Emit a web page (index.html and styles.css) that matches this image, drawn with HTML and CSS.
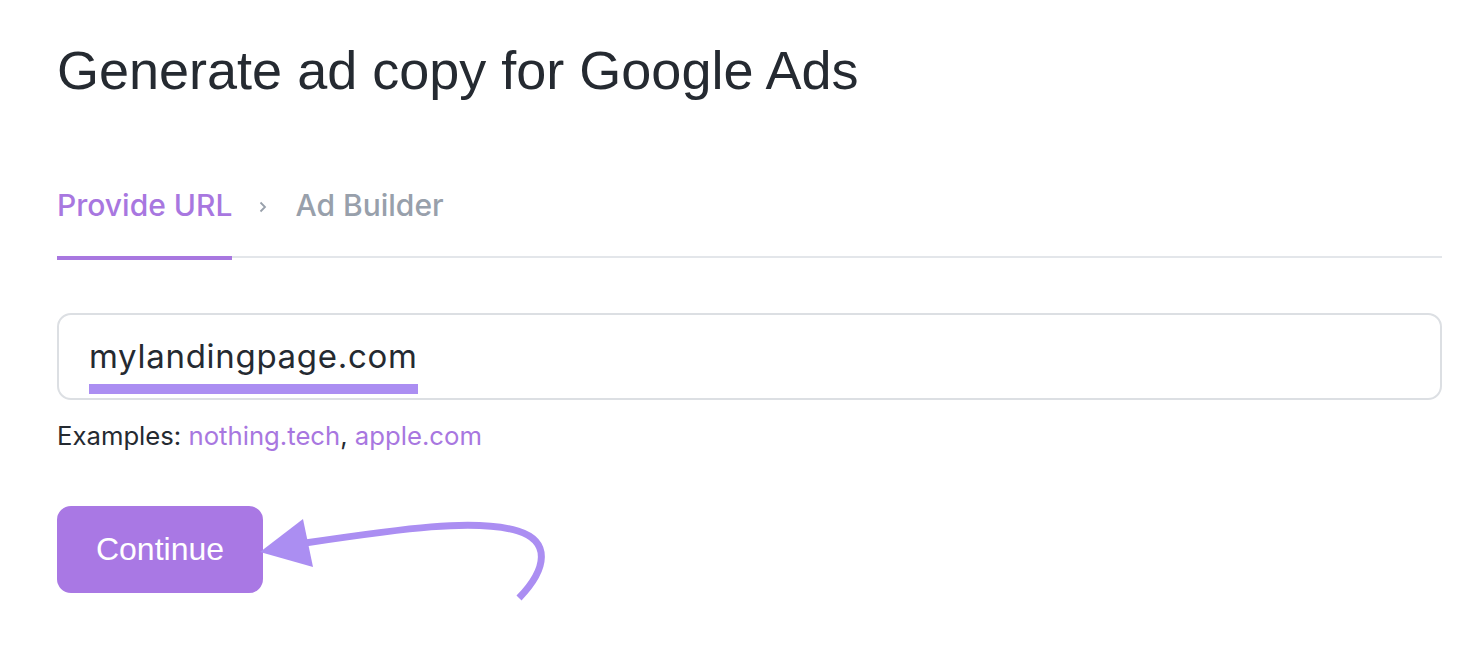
FILE: index.html
```html
<!DOCTYPE html>
<html lang="en">
<head>
<meta charset="UTF-8" />
<title>Generate ad copy for Google Ads</title>
<link rel="stylesheet" href="styles.css">
</head>
<body>
  <main class="page">
    <h1 class="title">Generate ad copy for Google Ads</h1>

    <!-- Steps -->
    <nav class="steps">
      <span class="step active">Provide URL</span>
      <svg class="chevron" width="8" height="12" viewBox="0 0 8 12"><path d="M1.5 1.5 L6 6 L1.5 10.5" fill="none" stroke="#98a0ab" stroke-width="1.8"/></svg>
      <span class="step">Ad Builder</span>
    </nav>

    <!-- URL input -->
    <div class="url-field">
      <span class="url-text">mylandingpage.com</span>
    </div>
    <p class="examples">Examples: <a href="#">nothing.tech</a>, <a href="#">apple.com</a></p>

    <div class="actions">
      <button class="continue">Continue</button>
      <svg class="arrow" width="320" height="140" viewBox="250 490 320 140">
        <path d="M305 543 C 400 529, 475 518, 518 531 C 550 541, 548 568, 519 598" fill="none" stroke="#ab8ef2" stroke-width="7"/>
        <polygon points="260,552 303,519 313,567" fill="#ab8ef2"/>
      </svg>
    </div>
  </main>
</body>
</html>
```

FILE: styles.css
```css
* {
  margin: 0;
  padding: 0;
  box-sizing: border-box;
}
body {
  font-family: Inter, "Liberation Sans", sans-serif;
  background: #fff;
  color: #252a31;
}
.page {
  padding: 0 38px 75px 57px;
}
.title {
  font-family: "Liberation Sans", Arial, sans-serif;
  font-weight: 400;
  font-size: 54px;
  line-height: 60px;
  padding-top: 40px;
  color: #252a31;
}

/* Steps */
.steps {
  display: flex;
  align-items: flex-start;
  margin-top: 88px;
  border-bottom: 2px solid #e3e6ea;
  height: 70px;
}
.step {
  font-size: 30px;
  font-weight: 500;
  color: #98a0ab;
  line-height: 34px;
  height: 70px;
}
.step.active {
  color: #a877e0;
  border-bottom: 4px solid #a877e0;
  margin-bottom: -2px;
  height: 72px;
}
.chevron {
  margin: 13px 28px 0 27px;
}

/* Input */
.url-field {
  margin-top: 55px;
  height: 87px;
  border: 2px solid #dcdfe3;
  border-radius: 14px;
  padding: 21px 30px 0;
}
.url-text {
  display: inline-block;
  font-size: 33px;
  letter-spacing: 0.7px;
  line-height: 40px;
  color: #252a31;
  border-bottom: 10px solid #ab8ef2;
  padding-bottom: 8px;
}
.examples {
  margin-top: 20px;
  font-size: 25.7px;
  line-height: 32px;
}
.examples a {
  color: #a877e0;
  text-decoration: none;
}

/* Button */
.actions {
  position: relative;
  margin-top: 54px;
}
.continue {
  width: 206px;
  height: 87px;
  border: none;
  border-radius: 14px;
  background: #a978e4;
  color: #fff;
  font-family: "Liberation Sans", Arial, sans-serif;
  font-size: 32px;
}
.arrow {
  position: absolute;
  left: 193px;
  top: -16px;
  overflow: visible;
}
```
